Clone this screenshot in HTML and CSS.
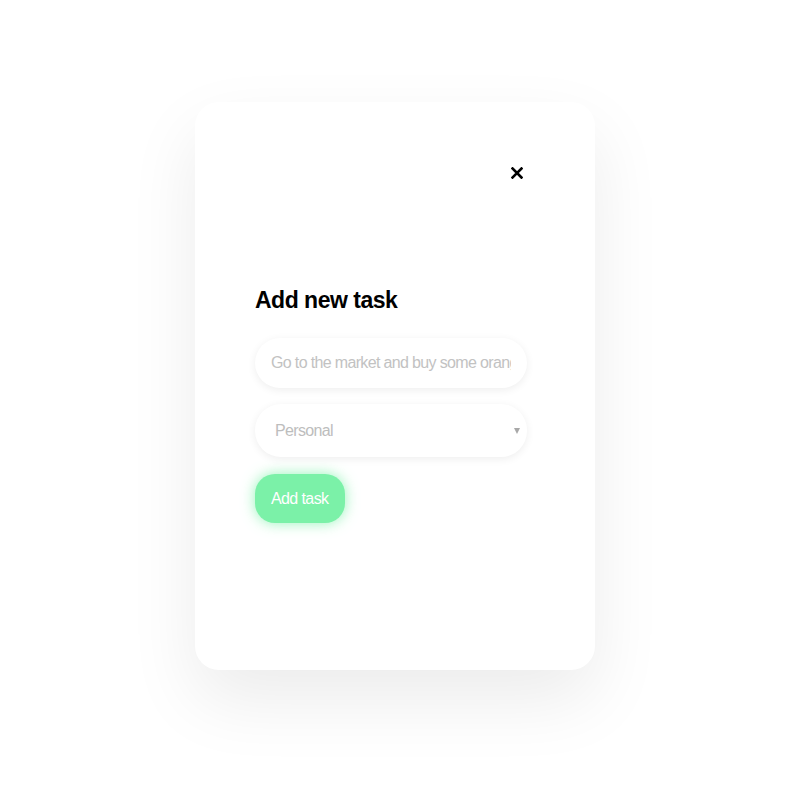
FILE: index.html
```
<!DOCTYPE html>
<html lang="en">
<head>
<meta charset="utf-8">
<title>Add new task</title>
<link rel="stylesheet" href="styles.css">
</head>
<body>
<div class="card">
  <div class="card-head">
    <button class="close" aria-label="Close">
      <svg width="12" height="12" viewBox="0 0 12 12"><path d="M1.5 1.5 L10.5 10.5 M10.5 1.5 L1.5 10.5" stroke="#000" stroke-width="2.6" stroke-linecap="square" fill="none"/></svg>
    </button>
  </div>
  <form class="task-form">
    <h1 class="title">Add new task</h1>
    <input class="field" type="text" placeholder="Go to the market and buy some oranges">
    <div class="select-wrap">
      <select class="field select">
        <option>Personal</option>
        <option>Work</option>
      </select>
      <span class="caret"></span>
    </div>
    <button type="button" class="add-btn">Add task</button>
  </form>
</div>
</body>
</html>
```

FILE: styles.css
```
* { box-sizing: border-box; }
html, body { margin: 0; padding: 0; background: #fff; }
body {
  font-family: "Liberation Sans", Arial, sans-serif;
  padding: 102px 0 0 195px;
  min-height: 798px;
}
.card {
  width: 400px;
  height: 568px;
  background: #fff;
  border-radius: 24px;
  box-shadow: 0 30px 70px rgba(0, 0, 0, 0.08);
  padding: 65px 72px 0 60px;
}
.card-head {
  display: flex;
  justify-content: flex-end;
}
.close {
  border: 0;
  background: none;
  padding: 0;
  width: 12px;
  height: 12px;
  display: flex;
  cursor: pointer;
}
.task-form {
  display: flex;
  flex-direction: column;
  align-items: flex-start;
}
.title {
  margin: 108px 0 0 0;
  font-size: 23px;
  font-weight: 700;
  letter-spacing: -0.5px;
  line-height: 27px;
  color: #000;
}
.field {
  width: 272px;
  border: 0;
  background: #fff;
  border-radius: 26px;
  box-shadow: 0 2px 8px rgba(0, 0, 0, 0.07);
  font-family: "Liberation Sans", Arial, sans-serif;
  font-size: 16px;
  letter-spacing: -0.65px;
  color: #bdbdbd;
  outline: none;
}
input.field {
  margin-top: 24px;
  height: 50px;
  padding: 0 16px;
}
input.field::placeholder { color: #c2c2c2; }
.select-wrap {
  position: relative;
  margin-top: 16px;
}
.select {
  -webkit-appearance: none;
  appearance: none;
  height: 53px;
  padding: 0 20px;
  display: block;
}
.caret {
  position: absolute;
  right: 7px;
  top: 24px;
  width: 0;
  height: 0;
  border-left: 3px solid transparent;
  border-right: 3px solid transparent;
  border-top: 6px solid #a8a8a8;
  pointer-events: none;
}
.add-btn {
  margin-top: 17px;
  width: 90px;
  height: 49px;
  border: 0;
  border-radius: 20px;
  background: #7bf1a8;
  box-shadow: 0 0 14px rgba(123, 241, 168, 0.8);
  color: #fff;
  font-family: "Liberation Sans", Arial, sans-serif;
  font-size: 16px;
  letter-spacing: -0.6px;
  white-space: nowrap;
  padding: 0 16px;
  text-align: left;
  cursor: pointer;
}
```
